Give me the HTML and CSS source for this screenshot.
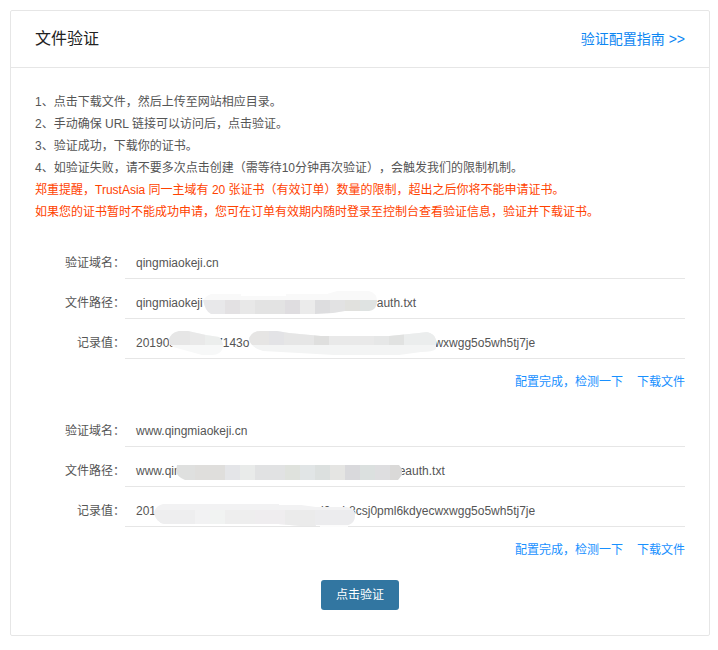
FILE: index.html
```html
<!DOCTYPE html>
<html lang="zh-CN">
<head>
    <meta charset="UTF-8">
    <meta name="viewport" content="width=device-width, initial-scale=1.0">
    <title>文件验证</title>
    <link rel="stylesheet" href="styles.css">
</head>
<body>
    <div class="card">
        <div class="card-header">
            <h1 class="card-title">文件验证</h1>
            <a class="guide-link" href="#">验证配置指南 &gt;&gt;</a>
        </div>

        <div class="card-body">
            <div class="notes">
                <p>1、点击下载文件，然后上传至网站相应目录。</p>
                <p>2、手动确保 URL 链接可以访问后，点击验证。</p>
                <p>3、验证成功，下载你的证书。</p>
                <p>4、如验证失败，请不要多次点击创建（需等待10分钟再次验证），会触发我们的限制机制。</p>
                <p class="warning">郑重提醒，TrustAsia 同一主域有 20 张证书（有效订单）数量的限制，超出之后你将不能申请证书。</p>
                <p class="warning">如果您的证书暂时不能成功申请，您可在订单有效期内随时登录至控制台查看验证信息，验证并下载证书。</p>
            </div>

            <div class="domain">
                <dl class="record">
                    <dt>验证域名：</dt>
                    <dd>qingmiaokeji.cn</dd>
                    <dt>文件路径：</dt>
                    <dd>
                        <span>qingmiaokeji</span>
                        <svg class="mask" width="174" height="24" aria-hidden="true">
                            <clipPath id="mask-path-1">
                                <path d="M0 9 L4 5 L8 3 H38 V5 H83 V3 H124 L134 0 H166 Q174 2 174 10 Q174 19 166 20 H142 L130 22 L112 23 H8 Q2 20 0 9Z"/>
                            </clipPath>
                            <g clip-path="url(#mask-path-1)">
                                <rect width="174" height="24" fill="#f9f9f9"/>
                                <rect y="9" width="22" height="15" fill="#e8e8ea"/>
                                <rect x="22" y="9" width="15" height="15" fill="#e3e1e3"/>
                                <rect x="37" y="9" width="15" height="15" fill="#e8e8e8"/>
                                <rect x="52" y="9" width="30" height="15" fill="#e3e3e3"/>
                                <rect x="82" y="9" width="15" height="15" fill="#dfdde0"/>
                                <rect x="97" y="9" width="15" height="15" fill="#ebebeb"/>
                                <rect x="112" y="9" width="15" height="15" fill="#dddddf"/>
                                <rect x="127" y="9" width="15" height="15" fill="#e2e2e3"/>
                                <rect x="142" y="9" width="15" height="15" fill="#e1e1de"/>
                                <rect x="157" y="9" width="17" height="15" fill="#dfe3e2"/>
                            </g>
                        </svg>
                        <span>auth.txt</span>
                    </dd>
                    <dt>记录值：</dt>
                    <dd>
                        <span>201903</span>
                        <svg class="mask" width="40" height="24" aria-hidden="true">
                            <clipPath id="mask-value-1">
                                <path d="M-7 9 Q-6 2 3 0 H12 L30 4 L43 6 Q47 9 47 16 Q45 24 36 24 H26 L8 19 L-3 16 Q-6 15 -7 9Z"/>
                            </clipPath>
                            <g clip-path="url(#mask-value-1)">
                                <rect x="-7" width="54" height="25" fill="#f7f8f8"/>
                                <rect x="-7" width="21" height="14" fill="#e6e6e6"/>
                                <rect x="14" width="15" height="14" fill="#e9e9e9"/>
                                <rect x="29" width="18" height="14" fill="#eceeed"/>
                            </g>
                        </svg>
                        <span>7143o</span>
                        <svg class="mask" width="185" height="24" aria-hidden="true">
                            <clipPath id="mask-value-2">
                                <path d="M0 8 Q2 0 12 0 H28 L40 2 L72 5 H140 L170 2 L178 1 Q186 3 187 9 V18 Q184 21 172 21 L150 24 H85 L50 22 L14 20 Q2 17 0 8Z"/>
                            </clipPath>
                            <g clip-path="url(#mask-value-2)">
                                <rect width="188" height="25" fill="#f3f4f4"/>
                                <rect x="0" width="20" height="14" fill="#e6e5e4"/>
                                <rect x="20" width="15" height="14" fill="#e3e3e6"/>
                                <rect x="35" width="30" height="14" fill="#e6e6e6"/>
                                <rect x="65" width="15" height="14" fill="#dfdfde"/>
                                <rect x="80" width="45" height="14" fill="#e9e9e9"/>
                                <rect x="125" width="15" height="14" fill="#e6e7e7"/>
                                <rect x="140" width="15" height="14" fill="#e1e2e1"/>
                                <rect x="155" width="32" height="14" fill="#ebeded"/>
                            </g>
                        </svg>
                        <span>wxwgg5o5wh5tj7je</span>
                    </dd>
                </dl>
                <div class="actions">
                    <a href="#">配置完成，检测一下</a>
                    <a href="#">下载文件</a>
                </div>
            </div>

            <div class="domain">
                <dl class="record">
                    <dt>验证域名：</dt>
                    <dd>www.qingmiaokeji.cn</dd>
                    <dt>文件路径：</dt>
                    <dd>
                        <span>www.qin</span>
                        <svg class="mask" width="218" height="24" aria-hidden="true">
                            <clipPath id="mask-path-2">
                                <path d="M-4 6 H218 L221 10 V16 L217 21 H4 Q-4 18 -5 12Z"/>
                            </clipPath>
                            <g clip-path="url(#mask-path-2)">
                                <rect x="-5" width="19" height="24" fill="#dfe0df"/>
                                <rect x="14" width="30" height="24" fill="#dfdedc"/>
                                <rect x="44" width="15" height="24" fill="#e4e5e8"/>
                                <rect x="59" width="15" height="24" fill="#e9ebea"/>
                                <rect x="74" width="30" height="24" fill="#e1e2e3"/>
                                <rect x="104" width="15" height="24" fill="#dfe2dd"/>
                                <rect x="119" width="15" height="24" fill="#e1e5e6"/>
                                <rect x="134" width="15" height="24" fill="#dce0df"/>
                                <rect x="149" width="15" height="24" fill="#e5e5e3"/>
                                <rect x="164" width="15" height="24" fill="#d9d9dc"/>
                                <rect x="179" width="15" height="24" fill="#dbe0df"/>
                                <rect x="194" width="15" height="24" fill="#dedee0"/>
                                <rect x="209" width="13" height="24" fill="#dad9d8"/>
                            </g>
                        </svg>
                        <span>eauth.txt</span>
                    </dd>
                    <dt>记录值：</dt>
                    <dd>
                        <span>201</span>
                        <svg class="mask" width="165" height="24" aria-hidden="true">
                            <clipPath id="mask-value-3">
                                <path d="M-2 14 Q-1 7 7 5 H123 V6 H145 L160 8 H190 Q199 9 199 16 Q199 24 192 26 V28 H164 V27 H145 L122 25 H8 Q0 23 -2 14Z"/>
                            </clipPath>
                            <g clip-path="url(#mask-value-3)">
                                <rect x="-2" width="202" height="29" fill="#f2f2f3"/>
                                <rect x="-2" y="11" width="41" height="17" fill="#eeeeef"/>
                                <rect x="54" y="11" width="15" height="17" fill="#f1f3f2"/>
                                <rect x="69" y="11" width="30" height="17" fill="#eeeeee"/>
                                <rect x="99" y="11" width="30" height="17" fill="#efedef"/>
                                <rect x="129" y="11" width="30" height="17" fill="#ebebeb"/>
                                <rect x="159" y="11" width="40" height="17" fill="#ececee"/>
                                <rect x="160" y="26" width="35" height="3" fill="#fcfcfc"/>
                            </g>
                        </svg>
                        <span>l0xch8csj0pml6kdyecwxwgg5o5wh5tj7je</span>
                    </dd>
                </dl>
                <div class="actions">
                    <a href="#">配置完成，检测一下</a>
                    <a href="#">下载文件</a>
                </div>
            </div>

            <div class="submit">
                <button class="btn" type="button">点击验证</button>
            </div>
        </div>
    </div>
</body>
</html>
```

FILE: styles.css
```css
* {
    box-sizing: border-box;
}
body {
    margin: 10px 8px 10px 10px;
    background: #fff;
    color: #555;
    font-family: "Liberation Sans", "Noto Sans CJK SC", sans-serif;
    font-size: 12px;
    line-height: 22px;
    text-spacing-trim: space-all;
}
a {
    color: #1890ff;
    text-decoration: none;
}
.card {
    border: 1px solid #e6e6e6;
    border-radius: 2px;
}
.card-header {
    display: flex;
    justify-content: space-between;
    align-items: center;
    height: 57px;
    padding: 0 24px;
    border-bottom: 1px solid #e6e6e6;
}
.card-title {
    margin: 0;
    color: #222;
    font-size: 16px;
    font-weight: normal;
}
.guide-link {
    color: #0c86f2;
    font-size: 14px;
}
.card-body {
    padding: 23px 24px 25px;
}
.notes {
    margin-bottom: 24px;
}
.notes p {
    margin: 0;
}
.notes .warning {
    color: #ff4200;
}
.domain + .domain {
    margin-top: 22px;
}
.record {
    display: grid;
    grid-template-columns: 90px 1fr;
    row-gap: 8px;
    margin: 0;
}
.record dt {
    line-height: 32px;
    text-align: right;
}
.record dd {
    display: flex;
    align-items: center;
    height: 32px;
    margin: 0;
    padding-left: 11px;
    border-bottom: 1px solid #e6e6e6;
}
/* smudges over the private part of a value */
.mask {
    position: relative;
    flex: none;
    overflow: visible;
}
.actions {
    display: flex;
    justify-content: flex-end;
    gap: 14px;
    margin-top: 12px;
}
.submit {
    margin-top: 19px;
    text-align: center;
}
.btn {
    display: inline-block;
    height: 30px;
    padding: 0 15px;
    border: none;
    border-radius: 3px;
    background: #3276a1;
    color: #fff;
    font-family: inherit;
    font-size: 12px;
    line-height: 28px;
    vertical-align: top;
    cursor: pointer;
}
.btn:hover {
    background: #2a6589;
}
```
